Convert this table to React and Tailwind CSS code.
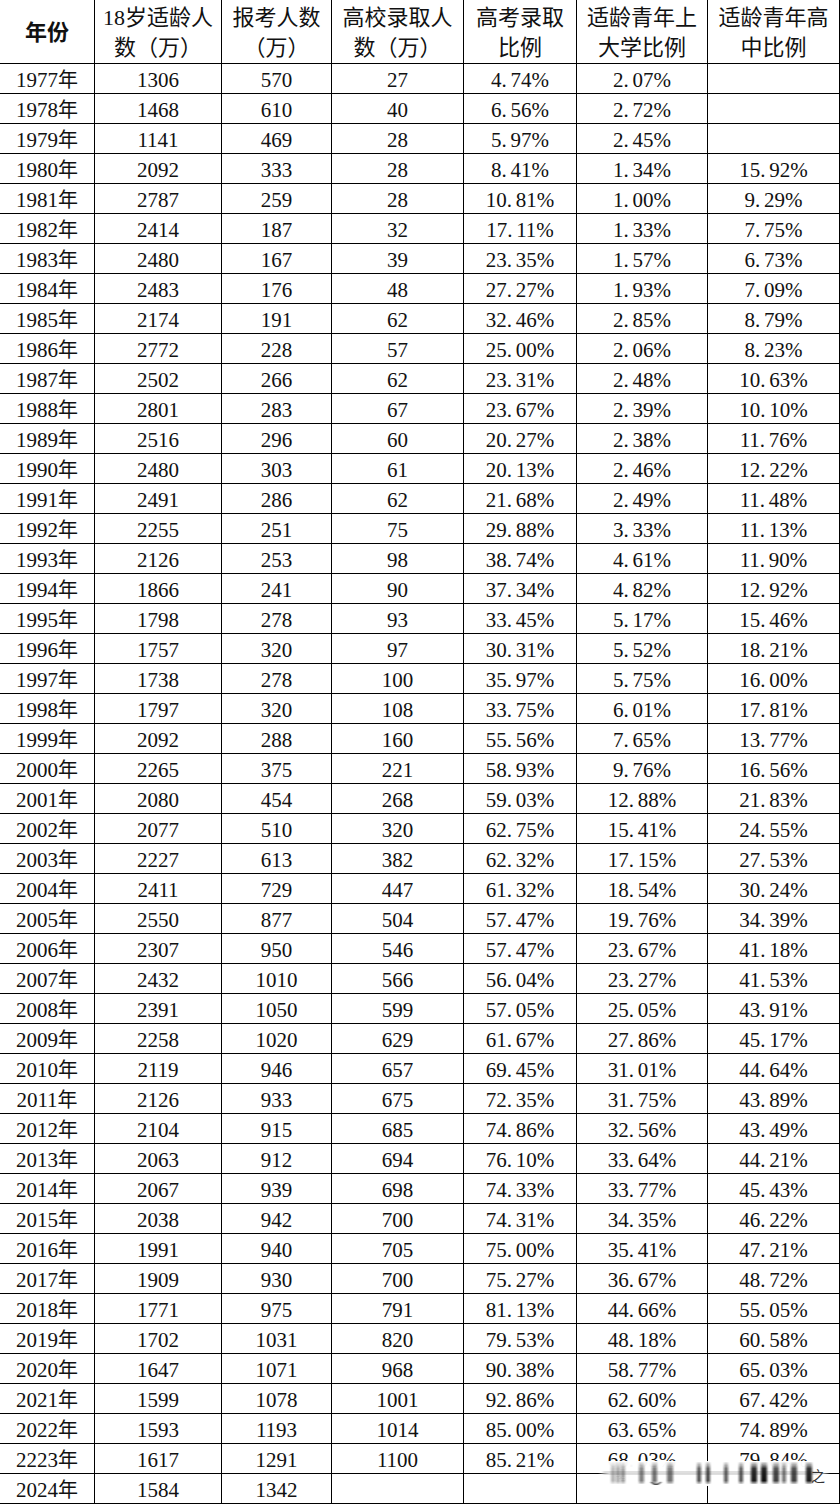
import React from "react";

const rows = [
  ["1977", "1306", "570", "27", "4.74%", "2.07%", ""],
  ["1978", "1468", "610", "40", "6.56%", "2.72%", ""],
  ["1979", "1141", "469", "28", "5.97%", "2.45%", ""],
  ["1980", "2092", "333", "28", "8.41%", "1.34%", "15.92%"],
  ["1981", "2787", "259", "28", "10.81%", "1.00%", "9.29%"],
  ["1982", "2414", "187", "32", "17.11%", "1.33%", "7.75%"],
  ["1983", "2480", "167", "39", "23.35%", "1.57%", "6.73%"],
  ["1984", "2483", "176", "48", "27.27%", "1.93%", "7.09%"],
  ["1985", "2174", "191", "62", "32.46%", "2.85%", "8.79%"],
  ["1986", "2772", "228", "57", "25.00%", "2.06%", "8.23%"],
  ["1987", "2502", "266", "62", "23.31%", "2.48%", "10.63%"],
  ["1988", "2801", "283", "67", "23.67%", "2.39%", "10.10%"],
  ["1989", "2516", "296", "60", "20.27%", "2.38%", "11.76%"],
  ["1990", "2480", "303", "61", "20.13%", "2.46%", "12.22%"],
  ["1991", "2491", "286", "62", "21.68%", "2.49%", "11.48%"],
  ["1992", "2255", "251", "75", "29.88%", "3.33%", "11.13%"],
  ["1993", "2126", "253", "98", "38.74%", "4.61%", "11.90%"],
  ["1994", "1866", "241", "90", "37.34%", "4.82%", "12.92%"],
  ["1995", "1798", "278", "93", "33.45%", "5.17%", "15.46%"],
  ["1996", "1757", "320", "97", "30.31%", "5.52%", "18.21%"],
  ["1997", "1738", "278", "100", "35.97%", "5.75%", "16.00%"],
  ["1998", "1797", "320", "108", "33.75%", "6.01%", "17.81%"],
  ["1999", "2092", "288", "160", "55.56%", "7.65%", "13.77%"],
  ["2000", "2265", "375", "221", "58.93%", "9.76%", "16.56%"],
  ["2001", "2080", "454", "268", "59.03%", "12.88%", "21.83%"],
  ["2002", "2077", "510", "320", "62.75%", "15.41%", "24.55%"],
  ["2003", "2227", "613", "382", "62.32%", "17.15%", "27.53%"],
  ["2004", "2411", "729", "447", "61.32%", "18.54%", "30.24%"],
  ["2005", "2550", "877", "504", "57.47%", "19.76%", "34.39%"],
  ["2006", "2307", "950", "546", "57.47%", "23.67%", "41.18%"],
  ["2007", "2432", "1010", "566", "56.04%", "23.27%", "41.53%"],
  ["2008", "2391", "1050", "599", "57.05%", "25.05%", "43.91%"],
  ["2009", "2258", "1020", "629", "61.67%", "27.86%", "45.17%"],
  ["2010", "2119", "946", "657", "69.45%", "31.01%", "44.64%"],
  ["2011", "2126", "933", "675", "72.35%", "31.75%", "43.89%"],
  ["2012", "2104", "915", "685", "74.86%", "32.56%", "43.49%"],
  ["2013", "2063", "912", "694", "76.10%", "33.64%", "44.21%"],
  ["2014", "2067", "939", "698", "74.33%", "33.77%", "45.43%"],
  ["2015", "2038", "942", "700", "74.31%", "34.35%", "46.22%"],
  ["2016", "1991", "940", "705", "75.00%", "35.41%", "47.21%"],
  ["2017", "1909", "930", "700", "75.27%", "36.67%", "48.72%"],
  ["2018", "1771", "975", "791", "81.13%", "44.66%", "55.05%"],
  ["2019", "1702", "1031", "820", "79.53%", "48.18%", "60.58%"],
  ["2020", "1647", "1071", "968", "90.38%", "58.77%", "65.03%"],
  ["2021", "1599", "1078", "1001", "92.86%", "62.60%", "67.42%"],
  ["2022", "1593", "1193", "1014", "85.00%", "63.65%", "74.89%"],
  ["2223", "1617", "1291", "1100", "85.21%", "68.03%", "79.84%"],
  ["2024", "1584", "1342", "", "", "", ""],
];

const headers = [
  ["年份"],
  ["18岁适龄人", "数（万）"],
  ["报考人数", "（万）"],
  ["高校录取人", "数（万）"],
  ["高考录取", "比例"],
  ["适龄青年上", "大学比例"],
  ["适龄青年高", "中比例"],
];

const font = {
  fontFamily: '"Liberation Serif", "Noto Sans CJK SC", serif',
};

function Pct({ v }) {
  const i = v.indexOf(".");
  if (i < 0) return v;
  return (
    <>
      {v.slice(0, i)}
      <span className="inline-block w-[9px]">.</span>
      {v.slice(i + 1)}
    </>
  );
}

function Watermark() {
  const bars = [
    [611, 4, 0.3], [616, 4, 0.35], [621, 4, 0.4], [639, 5, 0.55], [652, 5, 0.6],
    [667, 6, 0.6], [697, 4, 0.75], [706, 4, 0.8], [724, 4, 0.7], [739, 4, 0.75],
    [751, 6, 0.95], [761, 6, 1], [773, 6, 0.8], [782, 4, 0.6], [791, 6, 0.8],
    [806, 6, 0.95],
  ];
  return (
    <svg
      className="absolute left-[598px] top-[1458px]"
      width="232"
      height="32"
      viewBox="598 1458 232 32"
    >
      <defs>
        <linearGradient id="wbg" x1="0" x2="1" y1="0" y2="0">
          <stop offset="0" stopColor="#fff" stopOpacity="0" />
          <stop offset="0.05" stopColor="#fff" stopOpacity="0.97" />
          <stop offset="0.95" stopColor="#fff" stopOpacity="0.97" />
          <stop offset="1" stopColor="#fff" stopOpacity="0" />
        </linearGradient>
        <linearGradient id="wbar" x1="0" x2="0" y1="0" y2="1">
          <stop offset="0" stopColor="#111" stopOpacity="0.1" />
          <stop offset="0.3" stopColor="#111" stopOpacity="0.9" />
          <stop offset="0.85" stopColor="#111" stopOpacity="1" />
          <stop offset="1" stopColor="#111" stopOpacity="0.2" />
        </linearGradient>
        <filter id="wblur" x="-20%" y="-20%" width="140%" height="140%">
          <feGaussianBlur stdDeviation="1.1 0.7" />
        </filter>
      </defs>
      <rect x="598" y="1461" width="232" height="25" fill="url(#wbg)" />
      <rect x="603" y="1471" width="215" height="4" fill="#999" opacity="0.3" filter="url(#wblur)" />
      <g filter="url(#wblur)">
        {bars.map(([x, w, o], i) => (
          <rect key={i} x={x} y="1462" width={w} height="22" fill="url(#wbar)" opacity={o} />
        ))}
        <path d="M651 1482 q5 5 10 0" stroke="#222" strokeWidth="1.2" fill="none" opacity="0.8" />
      </g>
      <text x="811" y="1481" fontSize="14" fill="#333" fontFamily='"Noto Sans CJK SC", sans-serif'>
        之
      </text>
    </svg>
  );
}

export default function App() {
  return (
    <div className="relative w-[840px] h-[1504px] bg-white text-[#111] overflow-hidden" style={font}>
      <div className="grid grid-cols-[95px_127px_110px_132px_113px_131px_132px]">
        {headers.map((h, i) => (
          <div
            key={i}
            className="h-[64px] border-r border-b border-black flex flex-col items-center justify-center pt-[3px] text-[22px] leading-[30px]"
          >
            {h.map((l, j) => (
              <span key={j} className={i === 0 ? "font-bold" : ""}>
                {l}
              </span>
            ))}
          </div>
        ))}
        {rows.map((r) =>
          r.map((c, j) => (
            <div
              key={r[0] + "-" + j}
              className="h-[30px] border-r border-b border-black flex items-center justify-center text-[21px] leading-[30px] pt-[2px]"
            >
              {j === 0 ? (
                <span>
                  {c}
                  <span className="text-[20px]">年</span>
                </span>
              ) : j >= 4 ? (
                <Pct v={c} />
              ) : (
                c
              )}
            </div>
          ))
        )}
      </div>
      <Watermark />
    </div>
  );
}
